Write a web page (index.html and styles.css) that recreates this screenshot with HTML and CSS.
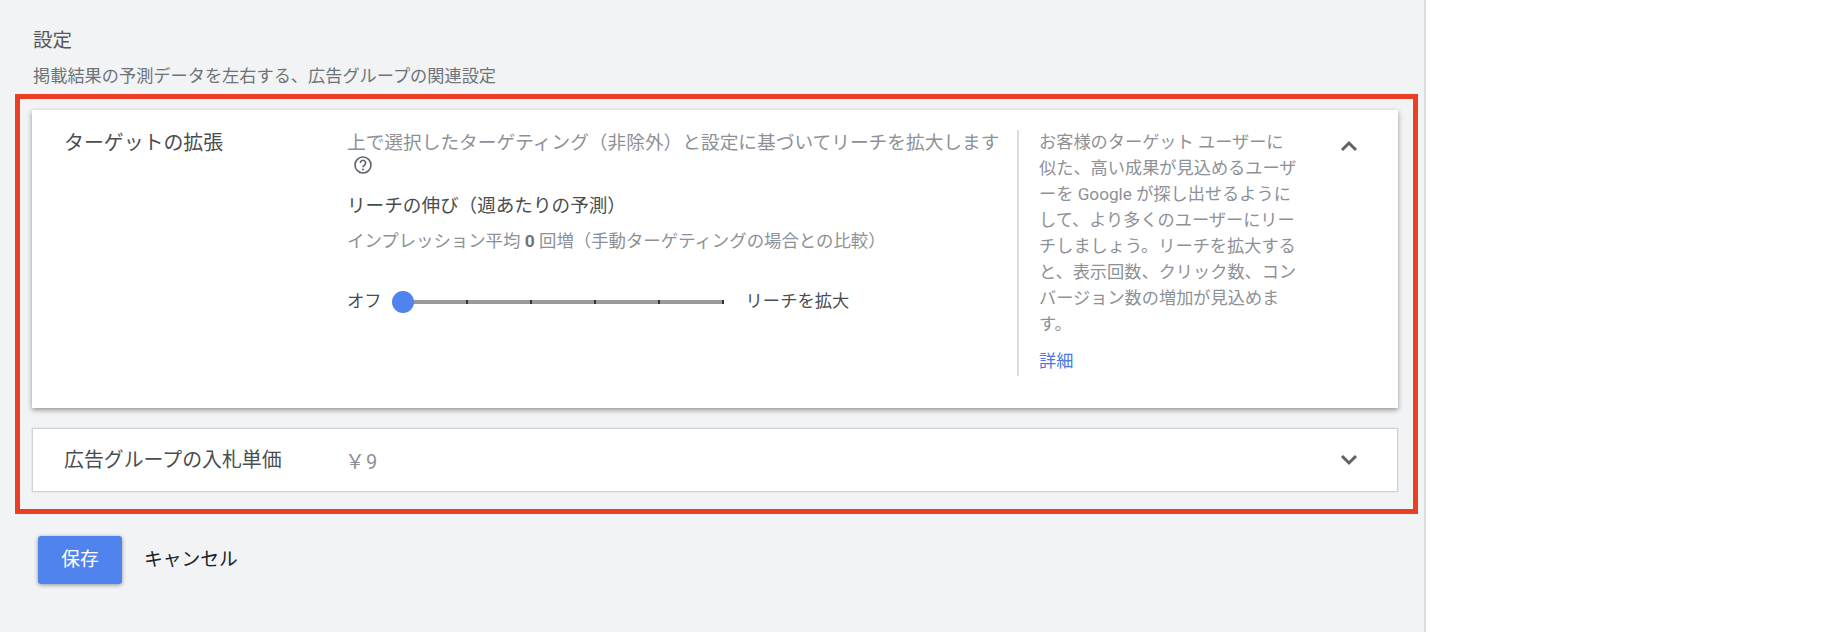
FILE: index.html
```html
<!DOCTYPE html>
<html lang="ja">
<head>
    <meta charset="UTF-8">
    <meta name="viewport" content="width=device-width, initial-scale=1.0">
    <title>設定</title>
    <link rel="stylesheet" href="styles.css">
</head>
<body>
    <main class="panel">
        <h2 class="title">設定</h2>
        <p class="subtitle">掲載結果の予測データを左右する、広告グループの関連設定</p>

        <div class="highlight">
            <section class="card card-open">
                <h3 class="card-label">ターゲットの拡張</h3>
                <div class="detail">
                    <p class="detail-lead">上で選択したターゲティング（非除外）と設定に基づいてリーチを拡大します<br>
                        <svg class="help" viewBox="0 0 20 20" width="20" height="20">
                            <circle cx="10" cy="10" r="8" fill="none" stroke="#5f6368" stroke-width="1.6"/>
                            <path d="M7.4 7.9a2.6 2.6 0 1 1 4 2.2c-.9.6-1.4 1-1.4 2.1" fill="none" stroke="#5f6368" stroke-width="1.6"/>
                            <circle cx="10" cy="14.6" r="1" fill="#5f6368"/>
                        </svg>
                    </p>
                    <p class="detail-head">リーチの伸び（週あたりの予測）</p>
                    <p class="detail-note">インプレッション平均 <b>0</b> 回増（手動ターゲティングの場合との比較）</p>
                    <div class="slider-row">
                        <span class="slider-text">オフ</span>
                        <div class="slider">
                            <span class="thumb"></span>
                            <span class="seg"></span>
                            <span class="seg"></span>
                            <span class="seg"></span>
                            <span class="seg"></span>
                            <span class="seg"></span>
                        </div>
                        <span class="slider-text">リーチを拡大</span>
                    </div>
                </div>
                <aside class="hint">
                    <p>お客様のターゲット ユーザーに<br>似た、高い成果が見込めるユーザ<br>ーを Google が探し出せるように<br>して、より多くのユーザーにリー<br>チしましょう。リーチを拡大する<br>と、表示回数、クリック数、コン<br>バージョン数の増加が見込めま<br>す。</p>
                    <a class="hint-link" href="#">詳細</a>
                </aside>
                <svg class="chevron chevron-open" viewBox="0 0 18 12" width="18" height="12">
                    <polyline points="2,10 9,3 16,10" fill="none" stroke="#5f6368" stroke-width="3"/>
                </svg>
            </section>

            <section class="card card-closed">
                <h3 class="card-label">広告グループの入札単価</h3>
                <div class="bid">￥9</div>
                <div></div>
                <svg class="chevron" viewBox="0 0 18 12" width="18" height="12">
                    <polyline points="2,2 9,9 16,2" fill="none" stroke="#5f6368" stroke-width="3"/>
                </svg>
            </section>
        </div>

        <div class="actions">
            <button type="button" class="save">保存</button>
            <button type="button" class="cancel">キャンセル</button>
        </div>
    </main>
</body>
</html>
```

FILE: styles.css
```css
html, body {
    height: 100%;
}
body {
    margin: 0;
    background: #fff;
    font-family: Roboto, "Noto Sans CJK JP", sans-serif;
    color: #4a4d50;
    overflow: hidden;
}
h2, h3, p {
    margin: 0;
    font-weight: 400;
}
.panel {
    box-sizing: border-box;
    width: 1426px;
    height: 100%;
    padding-top: 29px;
    background: #f1f3f4;
    border-right: 2px solid #dadce0;
}
.title {
    margin-left: 33px;
    font-size: 19.5px;
    line-height: 24px;
    color: #55585b;
}
.subtitle {
    margin: 12px 0 7px 33px;
    font-size: 17.2px;
    line-height: 22px;
    color: #6f7377;
}
.highlight {
    box-sizing: border-box;
    width: 1403px;
    margin-left: 15px;
    padding: 11px 15px 17px 12px;
    border: 5px solid #ea3f24;
}
.card {
    display: grid;
    grid-template-columns: 283px 670px 314px 36px;
    box-sizing: border-box;
    padding: 0 31px 0 32px;
    background: #fff;
}
.card-open {
    height: 298px;
    margin-bottom: 20px;
    box-shadow: 0 2px 5px rgba(0, 0, 0, 0.4);
}
.card-closed {
    height: 64px;
    align-items: center;
    border: 1px solid #cfd1d4;
    box-shadow: 0 0 1px rgba(0, 0, 0, 0.25);
    padding: 0 30px 0 31px;
}
.card-closed .card-label {
    padding-top: 2px;
}
.card-label {
    font-size: 19.9px;
    line-height: 26px;
    color: #4a4d50;
}
.card-open .card-label {
    padding-top: 21px;
}
.detail-lead {
    padding-top: 22px;
    font-size: 18.7px;
    line-height: 22px;
    color: #8d9196;
}
.help {
    margin-left: 6px;
    vertical-align: -4px;
}
.detail-head {
    margin-top: 18px;
    font-size: 18.6px;
    line-height: 24px;
    color: #4a4d50;
}
.detail-note {
    margin-top: 12px;
    font-size: 17.4px;
    line-height: 22px;
    color: #8d9196;
}
.detail-note b {
    color: #6f7377;
}
.slider-row {
    display: flex;
    align-items: center;
    height: 24px;
    margin-top: 38px;
    font-size: 17.3px;
}
.slider-text {
    margin-top: -5px;
}
.slider {
    position: relative;
    display: flex;
    margin: 0 22px 0 22px;
}
.seg {
    box-sizing: border-box;
    width: 64px;
    height: 4px;
    background: #9a9a9a;
    border-right: 2px solid #2a3350;
}
.thumb {
    position: absolute;
    left: -12px;
    top: -9px;
    width: 22px;
    height: 22px;
    border-radius: 50%;
    background: #5083ee;
}
.hint {
    box-sizing: border-box;
    height: 246px;
    margin-top: 20px;
    padding-left: 20px;
    border-left: 2px solid #dadce0;
    font-size: 17.2px;
    line-height: 26px;
    color: #8d9196;
    white-space: nowrap;
}
.hint p {
    margin-top: -1px;
}
.hint-link {
    display: block;
    margin-top: 11px;
    color: #4a78e0;
    text-decoration: none;
}
.chevron {
    justify-self: center;
}
.chevron-open {
    margin-top: 30px;
}
.bid {
    margin-left: -2px;
    font-size: 20px;
    color: #8d9196;
    letter-spacing: 1px;
}
.actions {
    display: flex;
    align-items: center;
    margin: 22px 0 0 38px;
}
button {
    font-family: inherit;
    font-size: 18.8px;
    line-height: 22px;
    border: none;
    cursor: pointer;
    padding: 0;
}
.save {
    width: 84px;
    height: 48px;
    background: #5083ee;
    color: #fff;
    border-radius: 3px;
    box-shadow: 0 1px 4px rgba(0, 0, 0, 0.4);
}
.cancel {
    margin-left: 22px;
    background: none;
    color: #202124;
}
```
